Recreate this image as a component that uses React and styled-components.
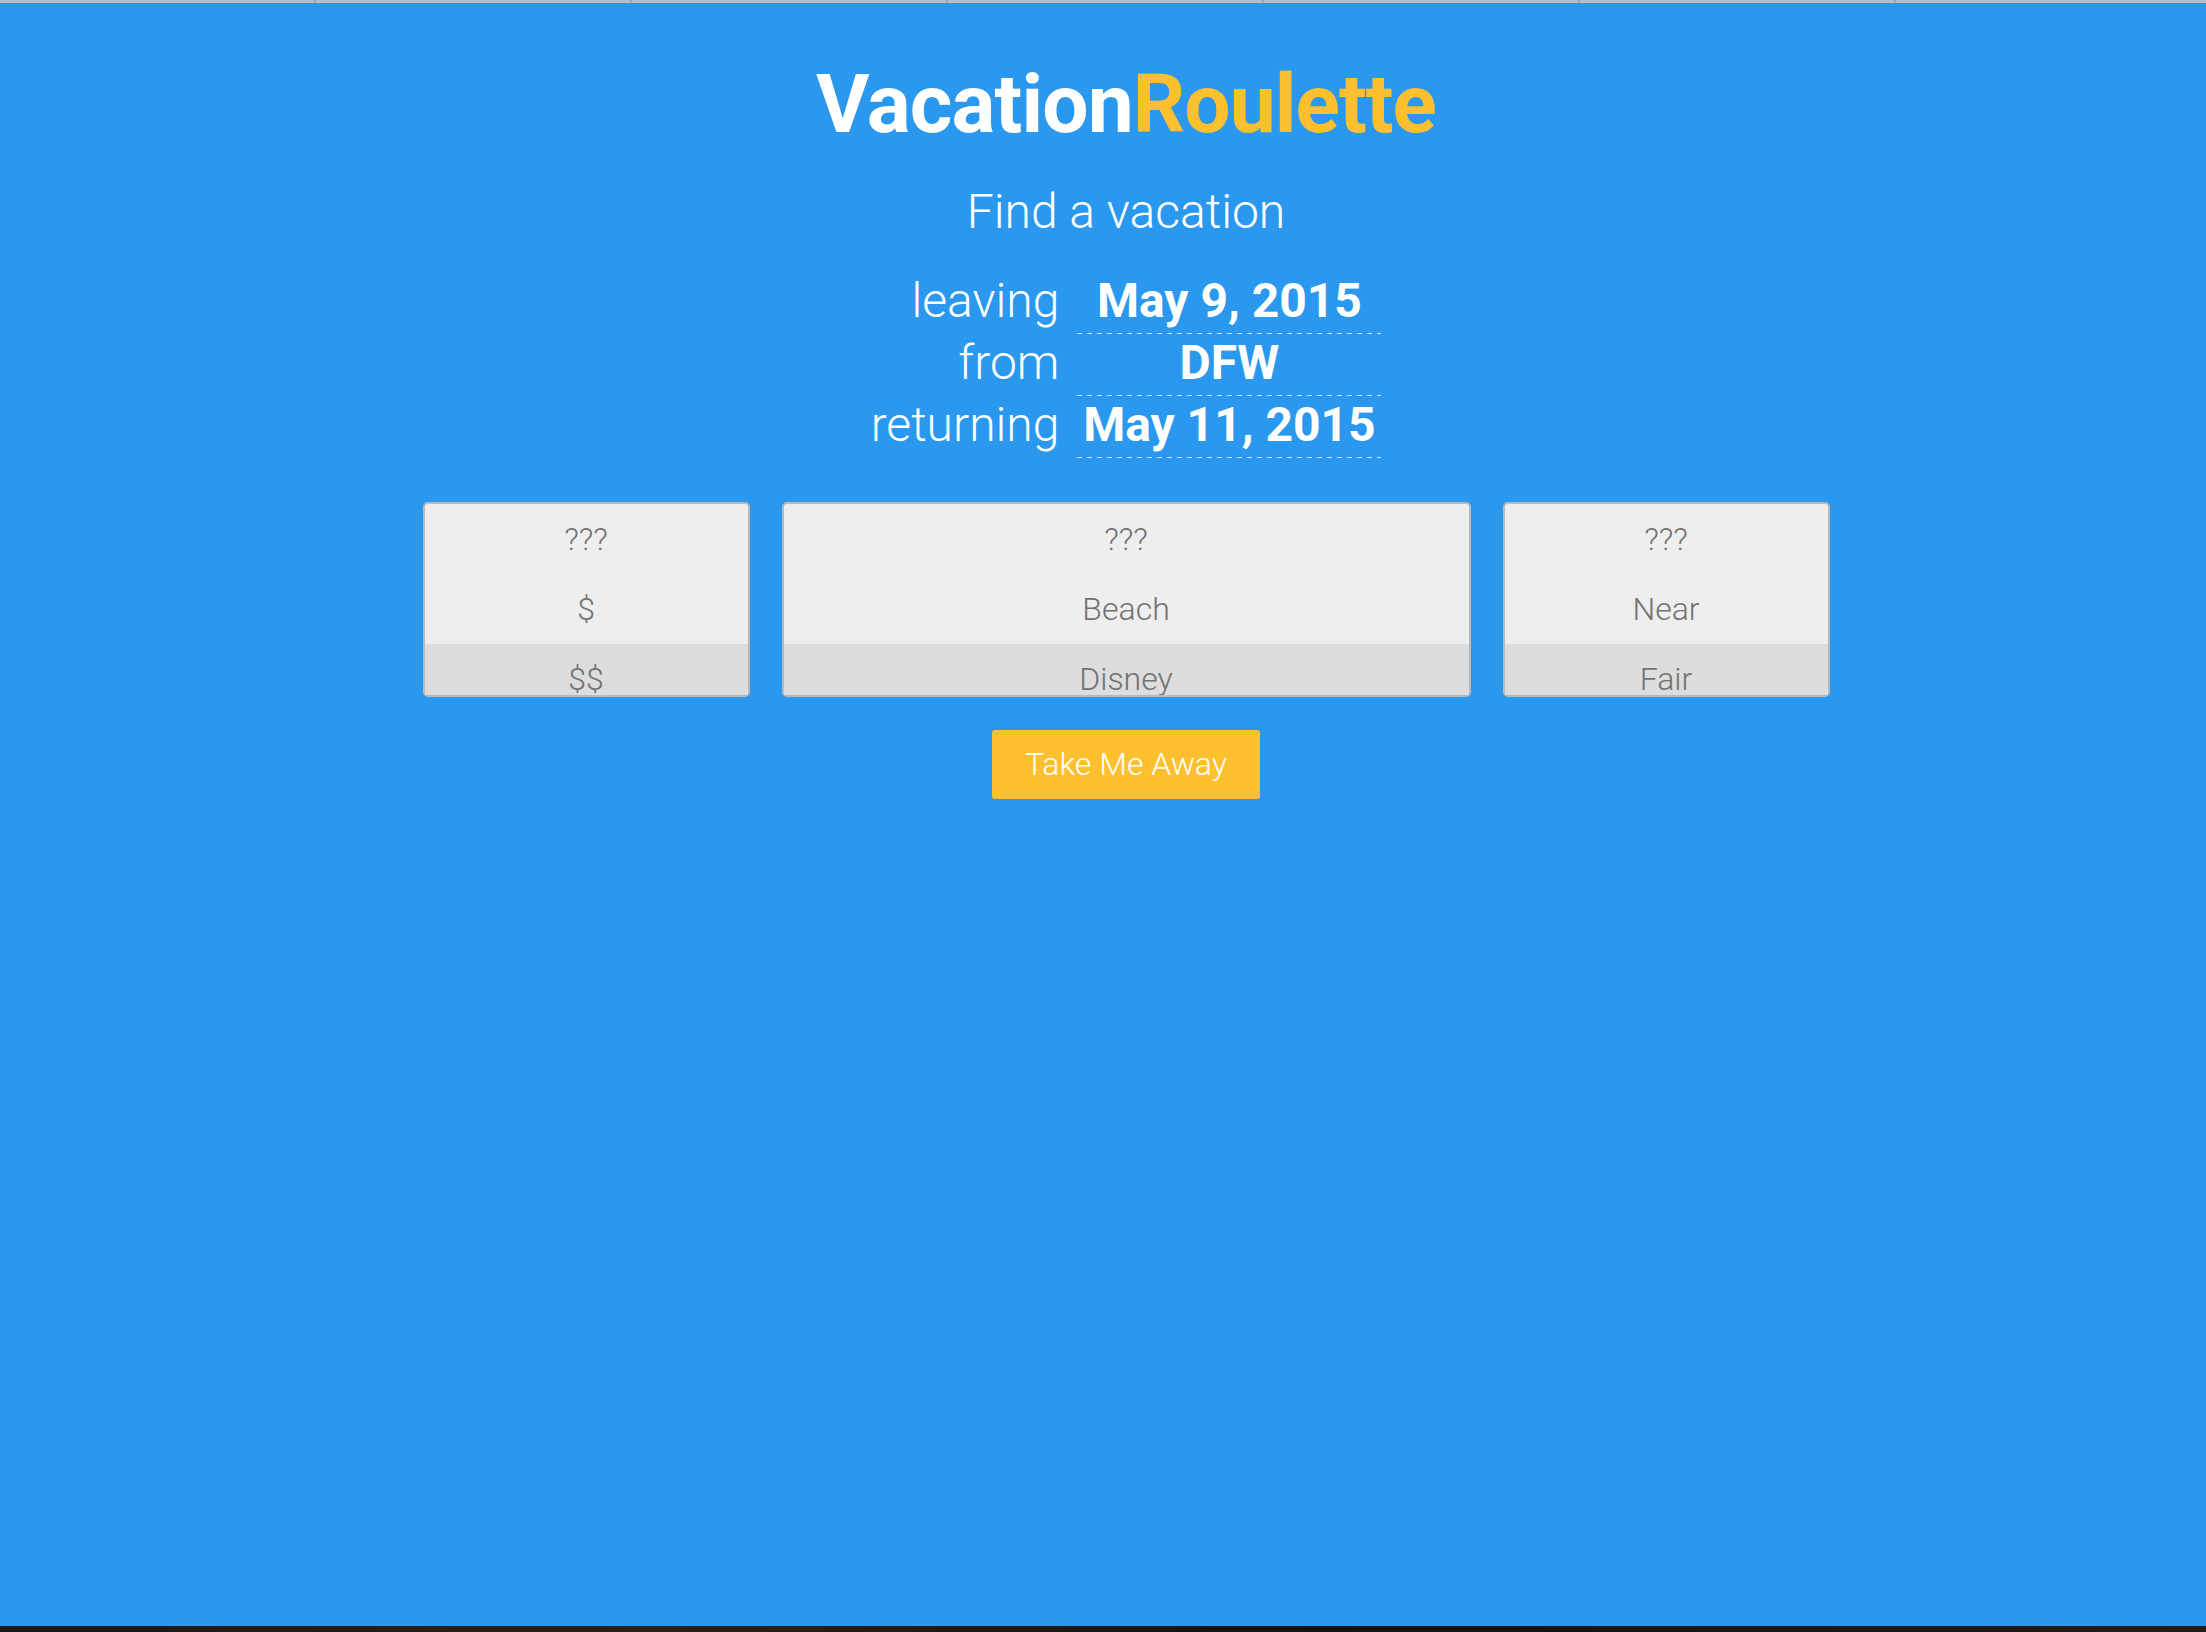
import React, { useState } from 'react';
import styled, { createGlobalStyle } from 'styled-components';

const GlobalStyle = createGlobalStyle`
  html, body {
    margin: 0;
    padding: 0;
    background: #2a98ee;
    font-family: Roboto, "Liberation Sans", sans-serif;
  }
`;

const Page = styled.div`
  display: flex;
  flex-direction: column;
  min-height: 100vh;
  background: #2a98ee;
`;

const TopStrip = styled.div`
  height: 3px;
  background: repeating-linear-gradient(to right, #bdbdbd 0 314px, #a3a3a3 314px 316px);
`;

const BottomStrip = styled.div`
  height: 6px;
  background: linear-gradient(to right, #1d1815, #2a2018 30%, #15110f 60%, #231c17);
`;

const Main = styled.main`
  flex: 1;
  display: flex;
  flex-direction: column;
  align-items: center;
  padding-left: 46px;
`;

const Title = styled.h1`
  margin: 53px 0 0;
  font-size: 82px;
  line-height: 96px;
  font-weight: 700;
  color: #ffffff;
  letter-spacing: -0.9px;
`;

const Accent = styled.span`
  color: #fec02f;
`;

const Subtitle = styled.h2`
  margin: 32px 0 0;
  font-size: 48px;
  line-height: 56px;
  font-weight: 300;
  color: #ffffff;
`;

const Form = styled.div`
  margin-top: 32px;
  display: grid;
  grid-template-columns: auto 304px;
  column-gap: 18px;
`;

const Label = styled.div`
  text-align: right;
  font-size: 48px;
  font-weight: 300;
  line-height: 58px;
  padding-bottom: 4px;
  color: #ffffff;
`;

const Value = styled.div`
  text-align: center;
  font-size: 48px;
  font-weight: 700;
  line-height: 58px;
  padding-bottom: 4px;
  color: #ffffff;
  background-image: linear-gradient(to right, rgba(255, 255, 255, 0.75) 55%, transparent 0%);
  background-size: 10px 1px;
  background-repeat: repeat-x;
  background-position: left bottom 0;
`;

const Reels = styled.div`
  margin-top: 44px;
  width: 1407px;
  display: grid;
  grid-template-columns: 327px 1fr 327px;
  gap: 32px;
`;

const Reel = styled.div`
  height: 195px;
  box-sizing: border-box;
  border: 2px solid #b9b9b9;
  border-radius: 5px;
  background: #eeeeee;
  overflow: hidden;
`;

const ReelItem = styled.div`
  height: 70px;
  display: flex;
  align-items: center;
  justify-content: center;
  font-size: 32px;
  font-weight: 300;
  color: #727272;
  background: ${p => (p.$selected ? '#dddddd' : 'transparent')};
`;

const GoButton = styled.button`
  margin-top: 33px;
  padding: 16px 33px;
  border: none;
  border-radius: 3px;
  background: #fec02f;
  color: #ffffff;
  font-family: Roboto, "Liberation Sans", sans-serif;
  font-size: 32px;
  font-weight: 300;
  line-height: 37px;
  cursor: pointer;
`;

const trip = [
  { label: 'leaving', value: 'May 9, 2015' },
  { label: 'from', value: 'DFW' },
  { label: 'returning', value: 'May 11, 2015' },
];

const reels = [
  ['???', '$', '$$'],
  ['???', 'Beach', 'Disney'],
  ['???', 'Near', 'Fair'],
];

const App = () => {
  const [spins, setSpins] = useState(0);

  return (
    <Page>
      <GlobalStyle />
      <TopStrip />
      <Main>
        <Title>
          Vacation<Accent>Roulette</Accent>
        </Title>
        <Subtitle>Find a vacation</Subtitle>
        <Form>
          {trip.map(row => (
            <React.Fragment key={row.label}>
              <Label>{row.label}</Label>
              <Value>{row.value}</Value>
            </React.Fragment>
          ))}
        </Form>
        <Reels>
          {reels.map((items, i) => (
            <Reel key={i}>
              {items.map((item, j) => (
                <ReelItem key={item} $selected={j === 2}>{item}</ReelItem>
              ))}
            </Reel>
          ))}
        </Reels>
        <GoButton onClick={() => setSpins(spins + 1)}>Take Me Away</GoButton>
      </Main>
      <BottomStrip />
    </Page>
  );
};

export default App;
